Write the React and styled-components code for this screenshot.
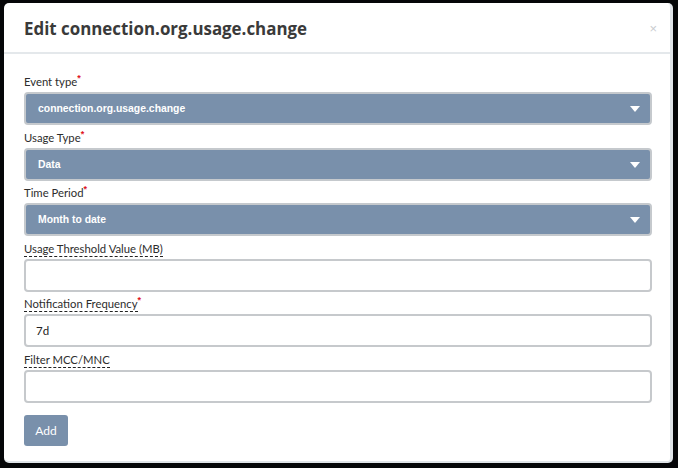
import React from "react";
import styled, { createGlobalStyle } from "styled-components";

const Global = createGlobalStyle`
  html, body { margin: 0; padding: 0; background: #050608; }
  body { font-family: Lato, "Liberation Sans", sans-serif; }
  * { box-sizing: border-box; }
`;

const Backdrop = styled.div`
  width: 678px;
  height: 468px;
  padding: 3px 5px 5px 4px;
  background: #050608;
`;

const Modal = styled.div`
  width: 669px;
  height: 460px;
  background: #fff;
  border-radius: 5px;
  border-right: 3px solid #dfe4e8;
  border-bottom: 2px solid #dfe4e8;
  display: flex;
  flex-direction: column;
`;

const Header = styled.div`
  height: 51px;
  border-bottom: 2px solid #e4e8eb;
  display: flex;
  align-items: center;
  justify-content: space-between;
  padding: 0 13px 0 20px;
`;

const Title = styled.h4`
  margin: 0;
  font-family: "Open Sans", "Liberation Sans", sans-serif;
  font-weight: 700;
  font-size: 16.9px;
  color: #3a3a3a;
  padding-top: 2px;
`;

const Close = styled.span`
  font-family: "Liberation Sans", sans-serif;
  font-size: 13px;
  color: #c9ccd0;
  line-height: 1;
  padding-top: 2px;
`;

const Body = styled.div`
  padding: 20px 18px 0 20px;
  display: flex;
  flex-direction: column;
  gap: 4.5px;
`;

const Group = styled.div`
  display: flex;
  flex-direction: column;
`;

const Label = styled.label`
  font-size: 11.3px;
  color: #2d2d2d;
  height: 18px;
  padding-top: 1px;
  line-height: 16px;
  display: flex;
  align-items: flex-start;
`;

const LabelText = styled.span`
  border-bottom: ${(p) => (p.$dashed ? "1px dashed #222" : "none")};
  line-height: 14px;
`;

const Req = styled.span`
  color: #e0141e;
  font-family: "Liberation Sans", sans-serif;
  font-weight: 700;
  font-size: 9px;
  line-height: 8px;
  margin-top: -1px;
`;

const Select = styled.div`
  height: 33px;
  border: 2px solid #c5c9cd;
  border-radius: 4px;
  background: #7990ab;
  color: #fff;
  font-family: "Liberation Sans", Arial, sans-serif;
  font-weight: 700;
  font-size: 10.4px;
  display: flex;
  align-items: center;
  justify-content: space-between;
  padding: 0 10px 0 12px;
`;

const Caret = styled.span`
  width: 0;
  height: 0;
  border-left: 5px solid transparent;
  border-right: 5px solid transparent;
  border-top: 6px solid #fff;
  margin-top: 1px;
`;

const Input = styled.div`
  height: 33px;
  border: 2px solid #c6c9cc;
  border-radius: 4px;
  background: #fff;
  font-size: 11.5px;
  color: #222;
  display: flex;
  align-items: center;
  padding: 0 10px;
`;

const Button = styled.button`
  align-self: flex-start;
  margin-top: 7.5px;
  width: 44px;
  height: 31px;
  border: none;
  border-radius: 3px;
  background: #7990ab;
  color: #fff;
  font-family: Lato, "Liberation Sans", sans-serif;
  font-size: 12px;
  padding: 0;
`;

const selects = [
  { label: "Event type", value: "connection.org.usage.change" },
  { label: "Usage Type", value: "Data" },
  { label: "Time Period", value: "Month to date" },
];

const inputs = [
  { label: "Usage Threshold Value (MB)", value: "", req: false },
  { label: "Notification Frequency", value: "7d", req: true },
  { label: "Filter MCC/MNC", value: "", req: false },
];

export default function App() {
  return (
    <>
      <Global />
      <Backdrop>
        <Modal>
          <Header>
            <Title>Edit connection.org.usage.change</Title>
            <Close>×</Close>
          </Header>
          <Body>
            {selects.map((s) => (
              <Group key={s.label}>
                <Label>
                  <LabelText>{s.label}</LabelText>
                  <Req>*</Req>
                </Label>
                <Select>
                  <span>{s.value}</span>
                  <Caret />
                </Select>
              </Group>
            ))}
            {inputs.map((s) => (
              <Group key={s.label}>
                <Label>
                  <LabelText $dashed>{s.label}</LabelText>
                  {s.req && <Req>*</Req>}
                </Label>
                <Input>{s.value}</Input>
              </Group>
            ))}
            <Button>Add</Button>
          </Body>
        </Modal>
      </Backdrop>
    </>
  );
}
